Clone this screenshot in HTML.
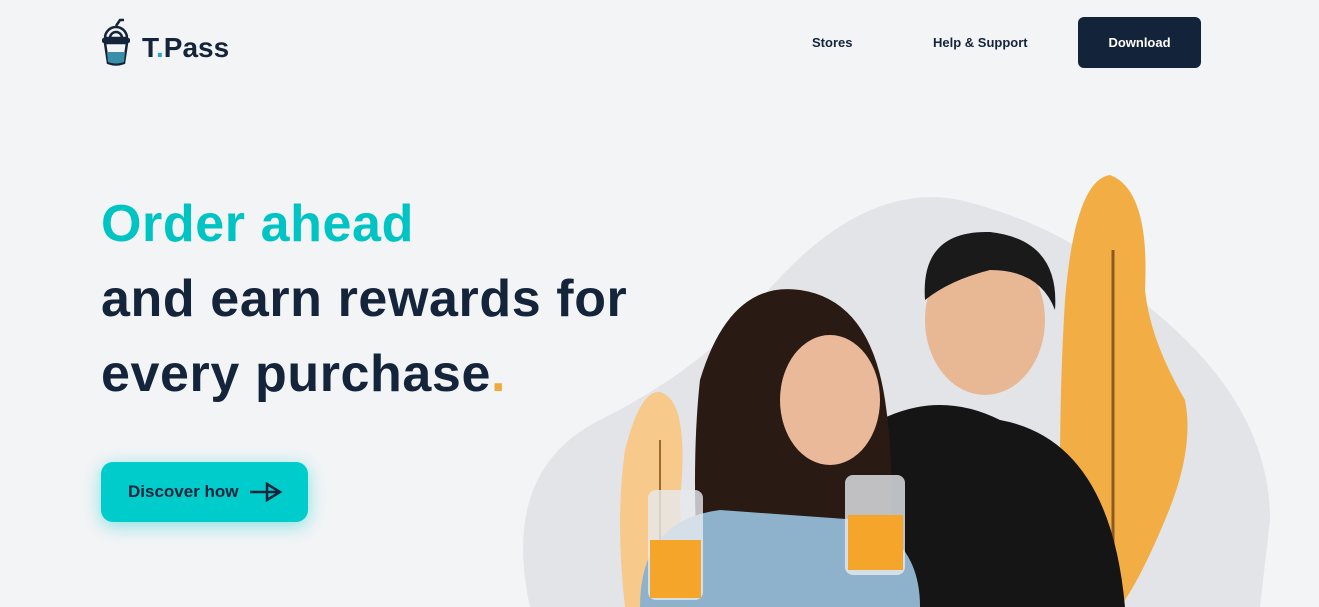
<!DOCTYPE html>
<html><head><style>
body{margin:0;width:1319px;height:607px;background:#f3f4f6;overflow:hidden;position:relative;font-family:"Liberation Sans",sans-serif;color:#14243a}
.nav{position:absolute;top:35px;font-size:13px;font-weight:bold}
.dl{position:absolute;left:1078px;top:17px;width:123px;height:51px;background:#13233a;border-radius:6px;color:#fff;font-size:13px;font-weight:bold;text-align:center;line-height:51px}
h1{position:absolute;left:101px;top:187px;margin:0;font-size:52px;line-height:75px;font-weight:bold;letter-spacing:.6px}
.btn{position:absolute;left:101px;top:462px;width:207px;height:60px;background:#00cccc;border-radius:12px;box-shadow:0 4px 18px rgba(0,204,204,.45);font-size:17px;font-weight:bold;line-height:60px}
</style></head><body>
<svg style="position:absolute;left:100px;top:18px" width="32" height="50" viewBox="0 0 32 50">
<path d="M16 8 L20 2 L24 2" stroke="#14243a" stroke-width="2.5" fill="none"/>
<path d="M5 20 A11 11 0 0 1 27 20 Z" fill="none" stroke="#14243a" stroke-width="2.5"/>
<path d="M10 20 A6 6 0 0 1 22 20" fill="none" stroke="#14243a" stroke-width="2.5"/>
<rect x="2" y="20" width="28" height="5" rx="2" fill="#14243a"/>
<path d="M5 25 L8 45 Q16 48 24 45 L27 25 Z" fill="none" stroke="#14243a" stroke-width="2.5"/>
<path d="M7 34 L25 34 L24 44 Q16 47 8 44 Z" fill="#3a8fa8"/>
</svg>
<div style="position:absolute;left:142px;top:32px;font-size:28px;font-weight:bold;color:#14243a">T<span style="color:#2aa7c9">.</span>Pass</div>
<div class="nav" style="left:812px">Stores</div>
<div class="nav" style="left:933px">Help &amp; Support</div>
<div class="dl">Download</div>
<h1><span style="color:#00c4c4">Order ahead</span><br>and earn rewards for<br>every purchase<span style="color:#f2a93b">.</span></h1>
<div class="btn"><span style="margin-left:27px">Discover how</span>
<svg style="position:absolute;left:148px;top:20px" width="34" height="20" viewBox="0 0 34 20"><path d="M1 10 H31 M18 2 L31 10 L18 18 Z" stroke="#14243a" stroke-width="2.5" fill="none"/></svg></div>
<svg style="position:absolute;left:500px;top:170px" width="819" height="437" viewBox="500 170 819 437">
<path d="M530 607 Q500 470 600 420 Q700 370 760 300 Q860 180 960 200 Q1080 230 1140 300 Q1270 400 1270 520 L1260 607 Z" fill="#e2e4e7"/>
<path d="M1110 175 Q1150 190 1145 290 Q1150 340 1185 400 Q1195 450 1165 520 Q1140 580 1120 607 L1080 607 Q1060 560 1060 470 Q1060 380 1065 300 Q1075 180 1110 175Z" fill="#f2ae45"/>
<path d="M1113 250 V607" stroke="#8a5a1e" stroke-width="3"/>
<path d="M660 392 Q690 400 680 500 Q685 560 660 607 L625 607 Q615 520 625 450 Q640 390 660 392Z" fill="#f7c98a"/>
<path d="M660 440 V607" stroke="#9a6a30" stroke-width="2"/>
<path d="M880 420 Q940 390 1000 420 Q1110 440 1125 607 L870 607Z" fill="#151515"/>
<ellipse cx="985" cy="320" rx="60" ry="75" fill="#e8b894"/>
<path d="M925 300 Q920 230 990 232 Q1060 240 1055 310 Q1040 270 990 270 Q950 280 925 300Z" fill="#1a1a1a"/>
<path d="M700 607 Q690 470 700 380 Q730 280 800 290 Q870 300 885 400 Q900 500 880 607Z" fill="#2a1a14"/>
<ellipse cx="830" cy="400" rx="50" ry="65" fill="#eab999"/>
<path d="M640 607 Q640 520 720 510 L860 520 Q920 540 920 607Z" fill="#8fb2cc"/>
<rect x="648" y="490" width="55" height="110" rx="8" fill="#e6eaee" opacity=".8"/>
<rect x="650" y="540" width="51" height="58" fill="#f4a52a"/>
<rect x="845" y="475" width="60" height="100" rx="8" fill="#e6eaee" opacity=".8"/>
<rect x="848" y="515" width="55" height="55" fill="#f4a52a"/>
</svg>
</body></html>
